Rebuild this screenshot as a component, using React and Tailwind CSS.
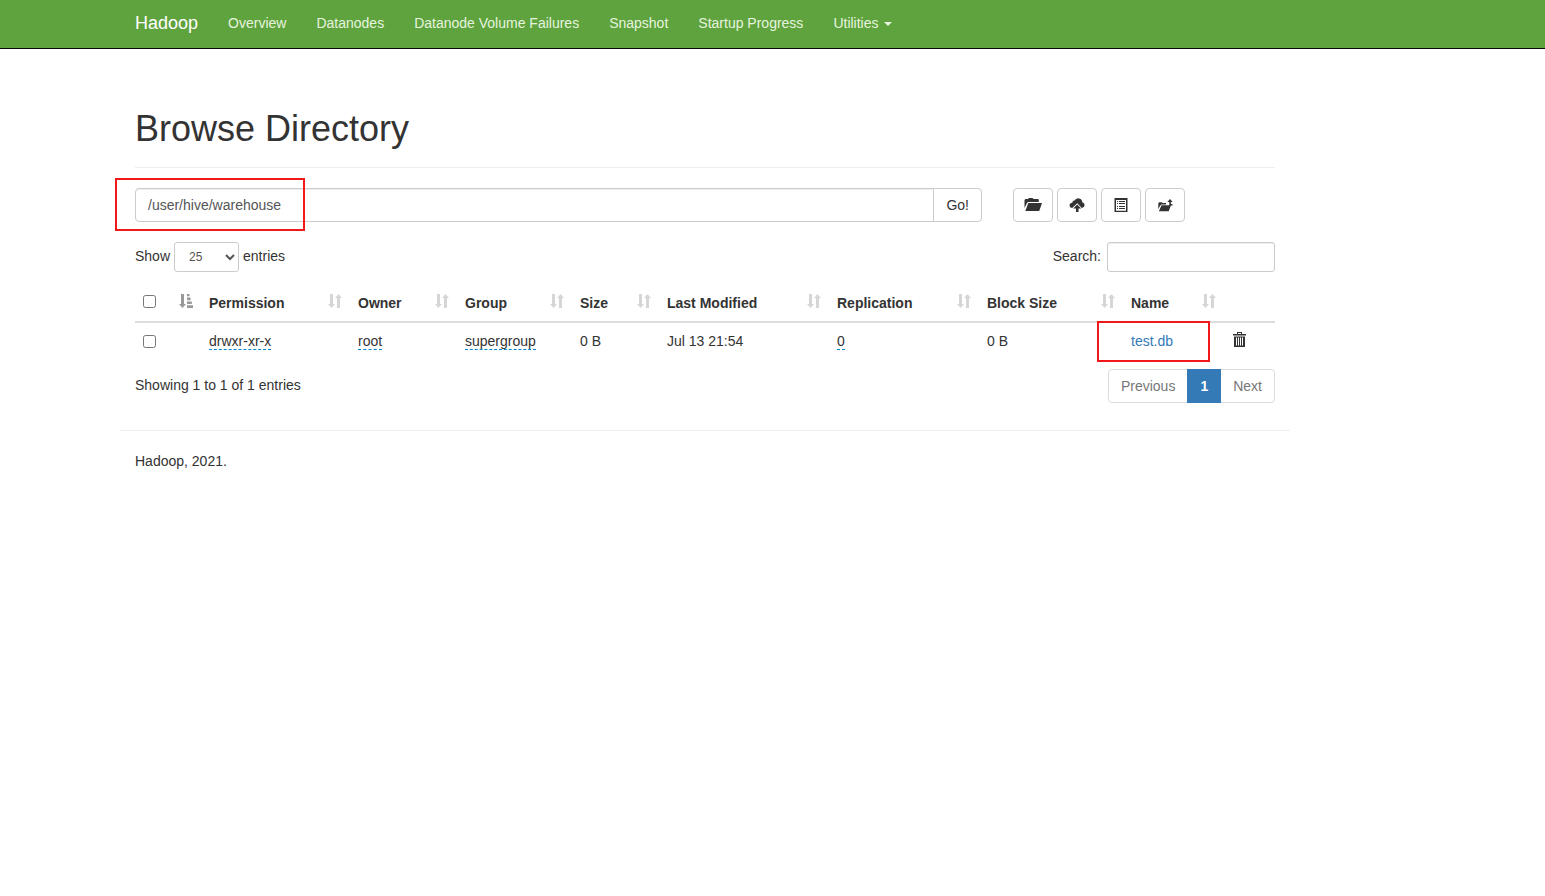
import { useState } from "react";

const navItems = [
  "Overview",
  "Datanodes",
  "Datanode Volume Failures",
  "Snapshot",
  "Startup Progress",
];

const columns = [
  { label: "Permission", width: "w-[149px]" },
  { label: "Owner", width: "w-[107px]" },
  { label: "Group", width: "w-[115px]" },
  { label: "Size", width: "w-[87px]" },
  { label: "Last Modified", width: "w-[170px]" },
  { label: "Replication", width: "w-[150px]" },
  { label: "Block Size", width: "w-[144px]" },
  { label: "Name", width: "w-[101px]" },
];

const files = [
  {
    permission: "drwxr-xr-x",
    owner: "root",
    group: "supergroup",
    size: "0 B",
    modified: "Jul 13 21:54",
    replication: "0",
    blockSize: "0 B",
    name: "test.db",
  },
];

/* ICONS */
function FolderOpenIcon() {
  return (
    <svg width="18" height="14" viewBox="0 0 18 14" fill="currentColor" aria-hidden="true">
      <path d="M.5 10V2L1.5 1H4L5 0h3.5l1 1H14l.8.8V4H4L3 5z" />
      <path d="M4.3 5H18l-2.8 8H1.3z" />
    </svg>
  );
}

function CloudUploadIcon() {
  return (
    <svg width="16" height="14" viewBox="0 0 16 14" fill="currentColor" aria-hidden="true">
      <path d="M3.2 10 1.5 9.4.6 8l.1-1.7L2 5l1.3-.3L3.8 3l1.6-.4L7 1 9.2.2l2.5.8 1.3 1.8.2 1.4 1.5.9.9 1.6-.4 1.7L14 9.6l-1.2.3L8.3 5.2z" />
      <path d="M8.2 6.6 12.2 10.4H9.5V14H7v-3.6H4.2z" />
    </svg>
  );
}

function ListIcon() {
  return (
    <svg width="14" height="14" viewBox="0 0 14 14" fill="currentColor" aria-hidden="true">
      <path fillRule="evenodd" d="M.5 0h13v14H.5zM2 2v10.7h10V2z" />
      <path d="M3 3h1v1H3zM5 3h6v1H5zM3 5h1v1H3zM5 5h6v1H5zM3 8h1v1H3zM5 8h6v1H5zM3 10h1v1H3zM5 10h6v1H5z" />
    </svg>
  );
}

function ParentFolderIcon() {
  return (
    <svg width="15" height="14" viewBox="0 0 15 14" fill="currentColor" aria-hidden="true">
      <path d="M.3 11V5.2l.9-.9h2.6l.8.8H8V6.4H3.2L2 8z" />
      <path d="M3.5 7.2h8l-.2-.8 1.7.8-2.3 6H.9z" />
      <path d="M12 1 14.7 4h-1.8v2h1.6v1.4h-3.2V4H9.3z" />
    </svg>
  );
}

function TrashIcon() {
  return (
    <svg width="14" height="16" viewBox="0 0 14 16" fill="currentColor" aria-hidden="true">
      <path fillRule="evenodd" d="M5 2V0h5v2h4v1.5H1V2zM6 1v1h3V1z" />
      <path fillRule="evenodd" d="M2 4.5h11V15H2zM4 5.5v8h1v-8zM6 5.5v8h1v-8zM8 5.5v8h1v-8zM10 5.5v8h1v-8z" />
    </svg>
  );
}

function SortIcon() {
  return (
    <svg width="14" height="14" viewBox="0 0 14 14" fill="currentColor" aria-hidden="true">
      <path d="M2 0h3v10h2l-3.5 4L0 10h2zM9 14h3V4h2l-3.5-4L7 4h2z" />
    </svg>
  );
}

function SortAscIcon() {
  return (
    <svg width="14" height="14" viewBox="0 0 14 14" fill="currentColor" aria-hidden="true">
      <path d="M2 0h3v10h2L3.5 14 0 10h2z" />
      <path d="M8 0h2.5v2.2H8zM8 3.5h3.5v2.7H8zM8 7.4h4.8V10H8zM8 11.2h6V14H8z" />
    </svg>
  );
}

const toolbar = [
  { label: "Create Directory", icon: <FolderOpenIcon /> },
  { label: "Upload Files", icon: <CloudUploadIcon /> },
  { label: "Cut & Paste", icon: <ListIcon /> },
  { label: "Parent Directory", icon: <ParentFolderIcon /> },
];

function Editable({ children }) {
  return (
    <span className="cursor-pointer border-b border-dashed border-[#0088cc]">
      {children}
    </span>
  );
}

function Navbar() {
  return (
    <nav className="border-b border-[#080808] bg-[#5fa33e]">
      <div className="ml-[120px] flex h-12 max-w-[1170px] items-center px-[15px] pb-0.5 text-[#e6f4de]">
        <a href="#" className="mr-[15px] text-lg leading-5 text-white">
          Hadoop
        </a>
        {navItems.map((item) => (
          <a key={item} href="#" className="px-[15px]">
            {item}
          </a>
        ))}
        <a href="#" className="flex items-center gap-[5px] px-[15px]">
          Utilities
          <span className="mt-0.5 border-x-4 border-t-4 border-x-transparent border-t-current" />
        </a>
      </div>
    </nav>
  );
}

export default function App() {
  const [path, setPath] = useState("/user/hive/warehouse");
  const [search, setSearch] = useState("");
  const [pageSize, setPageSize] = useState("25");

  return (
    <div className="bg-white font-['Liberation_Sans',Arial,sans-serif] text-sm leading-5 text-[#333]">
      <Navbar />

      <main className="ml-[120px] max-w-[1170px] px-[15px] pt-[60px]">
        {/* Header */}
        <h1 className="border-b border-[#eee] pb-[18px] text-4xl leading-10">
          Browse Directory
        </h1>

        {/* PATH + ACTIONS */}
        <div className="mt-5 flex">
          <form
            className="relative flex w-[847px]"
            onSubmit={(e) => e.preventDefault()}
          >
            <input
              type="text"
              aria-label="Directory"
              value={path}
              onChange={(e) => setPath(e.target.value)}
              className="h-[34px] min-w-0 flex-1 rounded-l border border-[#ccc] px-3 text-[#555] shadow-[inset_0_1px_1px_rgba(0,0,0,0.075)]"
            />
            <button
              type="submit"
              className="-ml-px h-[34px] rounded-r border border-[#ccc] px-3"
            >
              Go!
            </button>
            <div className="pointer-events-none absolute -left-5 -top-2.5 h-[53px] w-[190px] border-2 border-[#f01818]" />
          </form>
          <div className="ml-[31px] flex gap-1">
            {toolbar.map((action) => (
              <button
                key={action.label}
                type="button"
                aria-label={action.label}
                className="flex h-[34px] w-10 items-center justify-center rounded border border-[#ccc]"
              >
                {action.icon}
              </button>
            ))}
          </div>
        </div>

        {/* TABLE CONTROLS */}
        <div className="mt-5 flex items-start justify-between">
          <label className="flex items-center gap-1">
            <span className="-mt-0.5">Show</span>
            <select
              value={pageSize}
              onChange={(e) => setPageSize(e.target.value)}
              className="h-[30px] w-[65px] rounded-[3px] border border-[#ccc] bg-white px-2.5 text-xs text-[#555]"
            >
              <option>10</option>
              <option>25</option>
              <option>50</option>
              <option>100</option>
            </select>
            <span className="-mt-0.5">entries</span>
          </label>
          <label className="flex items-center gap-1.5">
            <span className="-mt-0.5">Search:</span>
            <input
              type="search"
              value={search}
              onChange={(e) => setSearch(e.target.value)}
              className="h-[30px] w-[168px] rounded-[3px] border border-[#ccc] px-2.5 text-xs shadow-[inset_0_1px_1px_rgba(0,0,0,0.075)]"
            />
          </label>
        </div>

        {/* FILE TABLE */}
        <table className="mt-[13px] w-full table-fixed border-separate border-spacing-0 text-left">
          <thead>
            <tr>
              <th className="w-[66px] border-b-2 border-[#ddd] p-2">
                <div className="flex h-5 items-start justify-between">
                  <input type="checkbox" aria-label="Select all" className="mt-0.5 size-[13px]" />
                  <span className="mt-px text-[#999]">
                    <SortAscIcon />
                  </span>
                </div>
              </th>
              {columns.map((col) => (
                <th key={col.label} className={`${col.width} border-b-2 border-[#ddd] p-2`}>
                  <div className="flex h-5 items-start justify-between whitespace-nowrap">
                    {col.label}
                    <span className="mt-px text-[#d6d6d6]">
                      <SortIcon />
                    </span>
                  </div>
                </th>
              ))}
              <th className="w-[51px] border-b-2 border-[#ddd] p-2" aria-label="Delete" />
            </tr>
          </thead>
          <tbody>
            {files.map((file) => (
              <tr key={file.name} className="align-top">
                <td className="p-2">
                  <input type="checkbox" aria-label={file.name} className="mt-1 block size-[13px]" />
                </td>
                <td className="p-2"><Editable>{file.permission}</Editable></td>
                <td className="p-2"><Editable>{file.owner}</Editable></td>
                <td className="p-2"><Editable>{file.group}</Editable></td>
                <td className="p-2">{file.size}</td>
                <td className="p-2">{file.modified}</td>
                <td className="p-2"><Editable>{file.replication}</Editable></td>
                <td className="p-2">{file.blockSize}</td>
                <td className="relative p-2">
                  <a href="#" className="text-[#337ab7]">{file.name}</a>
                  <div className="pointer-events-none absolute -left-[26px] -top-0.5 h-[41px] w-[113px] border-2 border-[#f01818]" />
                </td>
                <td className="p-2">
                  <button type="button" aria-label="Delete" className="mt-px block">
                    <TrashIcon />
                  </button>
                </td>
              </tr>
            ))}
          </tbody>
        </table>

        {/* PAGINATION */}
        <div className="mt-2.5 flex items-start justify-between">
          <p className="pt-1.5">Showing 1 to 1 of 1 entries</p>
          <div className="flex">
            <button type="button" className="h-[34px] rounded-l border border-[#ddd] px-3 text-[#777]">
              Previous
            </button>
            <button type="button" className="z-10 -mx-px h-[34px] border border-[#337ab7] bg-[#337ab7] px-3 font-bold text-white">
              1
            </button>
            <button type="button" className="h-[34px] rounded-r border border-[#ddd] px-3 text-[#777]">
              Next
            </button>
          </div>
        </div>
      </main>

      <footer className="ml-[120px] mt-[27px] max-w-[1170px] border-t border-[#eee] px-[15px] py-5">
        <p>Hadoop, 2021.</p>
      </footer>
    </div>
  );
}
